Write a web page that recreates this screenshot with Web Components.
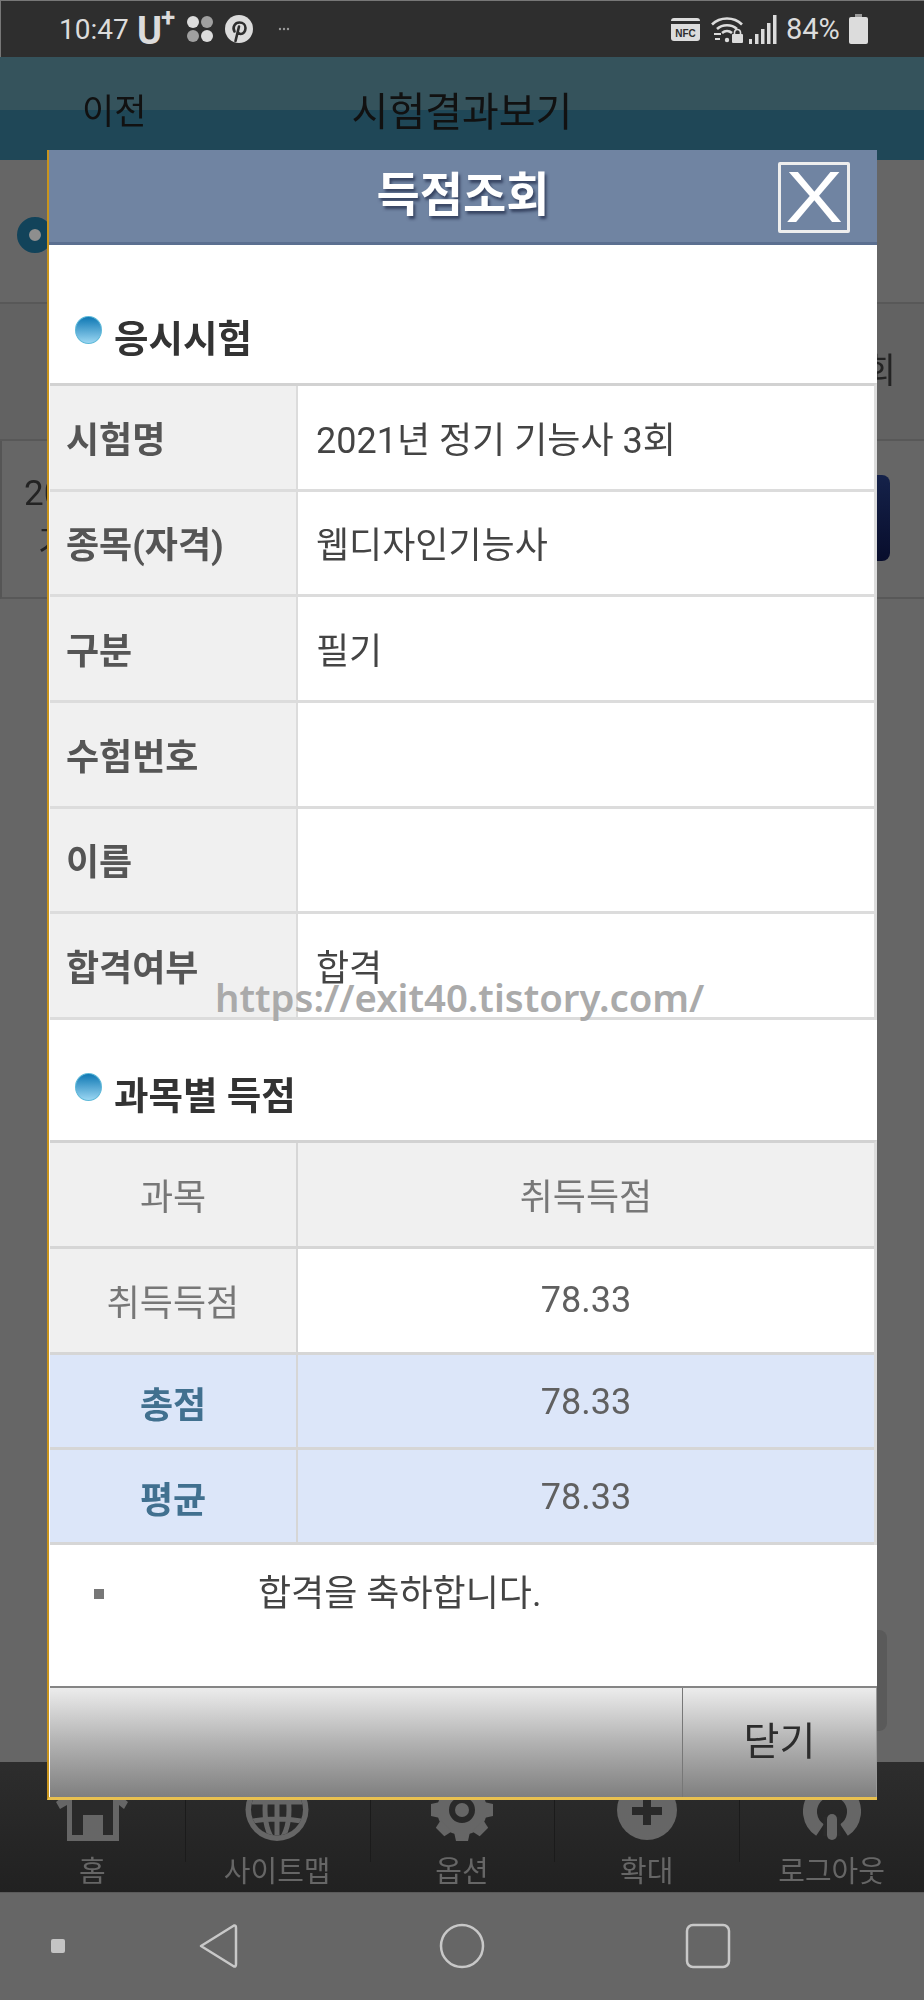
<!DOCTYPE html>
<html lang="ko">
<head>
<meta charset="utf-8">
<title>득점조회</title>
<style>
    html, body { margin: 0; padding: 0; }
    body {
        position: relative;
        width: 924px;
        height: 2000px;
        overflow: hidden;
        background: #666;
        font-family: Roboto, "Noto Sans CJK KR", sans-serif;
    }
</style>
</head>
<body>
<status-bar></status-bar>
<app-header></app-header>
<back-page></back-page>
<bottom-menu></bottom-menu>
<android-nav></android-nav>

<score-dialog>
    <section-title style="height:138px">응시시험</section-title>
    <info-table style="grid-auto-rows:105.67px">
        <info-row label="시험명">2021년 정기 기능사 3회</info-row>
        <info-row label="종목(자격)">웹디자인기능사</info-row>
        <info-row label="구분">필기</info-row>
        <info-row label="수험번호"></info-row>
        <info-row label="이름"></info-row>
        <info-row label="합격여부">합격</info-row>
    </info-table>
    <section-title style="height:120px">과목별 득점</section-title>
    <info-table style="grid-template-rows:106px 106px 95px 95px">
        <score-row label="과목" head>취득득점</score-row>
        <score-row label="취득득점">78.33</score-row>
        <score-row label="총점" total>78.33</score-row>
        <score-row label="평균" total>78.33</score-row>
    </info-table>
    <result-note>합격을 축하합니다.</result-note>
</score-dialog>

<water-mark>https://exit40.tistory.com/</water-mark>

<script>
// Small base class, each element just passes its markup
class ShadowBox extends HTMLElement {
    constructor(html) {
        super();
        this.attachShadow({ mode: 'open' });
        this.shadowRoot.innerHTML = html;
    }
}

class StatusBar extends ShadowBox {
    constructor() {
        super(`
            <style>
                :host {
                    display: flex;
                    align-items: center;
                    box-sizing: border-box;
                    height: 57px;
                    padding: 1px 56px 0 59px;
                    background: #2e2e2e;
                    box-shadow: inset 1px 1px 0 #777;
                    color: #dcdcdc;
                    font-size: 28px;
                }
                .time { width: 78px; }
                .carrier { position: relative; width: 50px; margin-top: 4px; font-size: 38px; line-height: 44px; font-weight: 700; }
                .carrier sup { position: absolute; left: 24px; top: -5px; font-size: 26px; line-height: 26px; }
                svg { display: block; flex: none; }
                .more { margin-left: 25px; }
                .spacer { flex: 1; }
                .nfc {
                    position: relative;
                    box-sizing: border-box;
                    width: 29px;
                    height: 23px;
                    margin-right: 11px;
                    border-top: 3px solid #dcdcdc;
                    border-radius: 3px;
                    background: linear-gradient(#2e2e2e 3px, #dcdcdc 3px);
                    color: #2e2e2e;
                    font: 800 10px/25px "Liberation Sans", sans-serif;
                    text-align: center;
                }
                .pct { width: 63px; margin-left: 9px; font-size: 29px; }
            </style>
            <span class="time">10:47</span>
            <span class="carrier">U<sup>+</sup></span>
            <svg width="28" height="28" viewBox="0 0 28 28" style="margin-left:-1px">
                <circle cx="7" cy="7" r="6" fill="#dcdcdc"/><circle cx="21" cy="7" r="6" fill="#a0a0a0"/>
                <circle cx="7" cy="21" r="6" fill="#a0a0a0"/><circle cx="21" cy="21" r="6" fill="#dcdcdc"/>
            </svg>
            <svg width="28" height="28" viewBox="0 0 28 28" style="margin-left:11px">
                <circle cx="14" cy="14" r="14" fill="#dcdcdc"/>
                <path d="M9.5 16.500C7 12 10 7.500 14.500 7.500c3.700 0 6 2.500 6 5.500 0 3.500-2.300 6-4.800 6-1.500 0-2.500-.8-3-1.800M14 11.500 10.500 26" fill="none" stroke="#2e2e2e" stroke-width="2.600" stroke-linecap="round"/>
            </svg>
            <svg class="more" width="12" height="4" viewBox="0 0 12 4">
                <circle cx="2" cy="2" r="1.200" fill="#999"/><circle cx="6" cy="2" r="1.200" fill="#999"/><circle cx="10" cy="2" r="1.200" fill="#999"/>
            </svg>
            <span class="spacer"></span>
            <span class="nfc">NFC</span>
            <svg width="32" height="28" viewBox="0 0 32 28" fill="none" stroke="#dcdcdc" stroke-width="2.600">
                <path d="M1 9.500C9 1.500 23 1.500 31 9.500"/>
                <path d="M6 14c5.500-5 14.500-5 20 0"/>
                <path d="M11 18c3-2.500 7-2.500 10 0"/>
                <circle cx="16" cy="25" r="2.200" fill="#dcdcdc" stroke="none"/>
                <path d="M3 19h7M4 24h5" stroke-width="2"/>
                <rect x="21" y="19" width="11" height="9" rx="1" fill="#dcdcdc" stroke="none"/>
                <path d="M23.500 19v-1.500a3 3 0 0 1 6 0V19" stroke-width="1.600"/>
            </svg>
            <svg width="28" height="29" viewBox="0 0 28 29" fill="#dcdcdc" style="margin-left:6px">
                <rect x="0" y="24" width="3" height="5"/><rect x="6" y="19" width="3.500" height="10"/>
                <rect x="12" y="14" width="3.500" height="15"/><rect x="18" y="8" width="3.500" height="21"/>
                <rect x="24" y="0" width="3.500" height="29"/>
            </svg>
            <span class="pct">84%</span>
            <svg width="19" height="30" viewBox="0 0 19 30" fill="#dcdcdc">
                <rect x="6" y="0" width="7" height="3" fill="#999"/>
                <rect x="0" y="3" width="19" height="27" rx="2"/>
            </svg>
        `);
    }
}

class AppHeader extends ShadowBox {
    constructor() {
        super(`
            <style>
                :host {
                    display: grid;
                    grid-template-columns: 1fr auto 1fr;
                    align-items: center;
                    height: 103px;
                    background: linear-gradient(#35535c 53px, #1f4757 53px);
                    color: #111;
                    font-size: 40px;
                    filter: blur(.5px);
                }
                .back { padding-left: 82px; font-size: 35px; }
            </style>
            <span class="back">이전</span>
            <span>시험결과보기</span>
            <span></span>
        `);
    }
}

// The page dimmed behind the dialog, only its edges show
class BackPage extends ShadowBox {
    constructor() {
        super(`
            <style>
                :host {
                    display: block;
                    height: 1602px;
                    background: #666;
                    color: #232323;
                    font-size: 35px;
                    filter: blur(.5px);
                }
                .logo { height: 142px; padding-left: 17px; box-sizing: border-box; padding-top: 57px; }
                .logo i {
                    display: block;
                    box-sizing: border-box;
                    width: 36px;
                    height: 36px;
                    border: 12px solid #12435a;
                    border-radius: 50%;
                    background: #8e8e8e;
                }
                .head {
                    display: flex;
                    justify-content: flex-end;
                    align-items: center;
                    box-sizing: border-box;
                    height: 139px;
                    padding: 0 28px 8px 0;
                    border-top: 2px solid #585858;
                    border-bottom: 2px solid #585858;
                    background: #626262;
                }
                .row {
                    display: flex;
                    justify-content: space-between;
                    align-items: center;
                    box-sizing: border-box;
                    height: 158px;
                    padding: 0 34px 0 0;
                    border-left: 2px solid #555;
                    border-bottom: 2px solid #585858;
                    line-height: 50px;
                }
                .date { padding-left: 22px; }
                .date span { display: block; padding-left: 14px; }
                .go {
                    width: 100px;
                    height: 86px;
                    margin-top: -3px;
                    border-radius: 8px;
                    background: linear-gradient(#15224a, #080d2c);
                }
                .side {
                    width: 100px;
                    height: 101px;
                    margin: 1031px 37px 0 auto;
                    border-radius: 8px;
                    background: #5a5a5a;
                }
            </style>
            <div class="logo"><i></i></div>
            <div class="head">회</div>
            <div class="row">
                <div class="date">2021년<span>기능사</span></div>
                <div class="go"></div>
            </div>
            <div class="side"></div>
        `);
    }
}

class BottomMenu extends ShadowBox {
    constructor() {
        super(`
            <style>
                :host {
                    display: grid;
                    grid-template-columns: repeat(5, 1fr);
                    height: 130px;
                    background: linear-gradient(#2d2d2d, #212121);
                    color: #666;
                    font-size: 29px;
                    filter: blur(.5px);
                }
                div { display: flex; flex-direction: column; align-items: center; position: relative; }
                div + div::before {
                    content: "";
                    position: absolute;
                    left: 0;
                    top: 0;
                    height: 100px;
                    border-left: 1px solid #1b1b1b;
                }
                svg { display: block; margin-top: 10px; }
                span { line-height: 40px; margin-top: 10px; }
            </style>
            <div>
                <svg width="72" height="70" viewBox="0 0 72 70">
                    <path d="M36 0 72 30 68 37 63 33V69H11V33L4 37 0 30Z" fill="#666"/>
                    <path d="M16 26V63H27V43H47V63H57V26Z" fill="#2a2a2a"/>
                </svg>
                <span>홈</span>
            </div>
            <div>
                <svg width="64" height="70" viewBox="0 0 64 70">
                    <defs><clipPath id="globe"><circle cx="32" cy="37.500" r="26"/></clipPath></defs>
                    <circle cx="32" cy="37.500" r="31.500" fill="#666"/>
                    <circle cx="32" cy="37.500" r="26" fill="#292929"/>
                    <g clip-path="url(#globe)" fill="none" stroke="#666" stroke-width="5">
                        <ellipse cx="32" cy="37.500" rx="12" ry="31"/>
                        <path d="M32 6V69M2 30H62M2 50Q32 44 62 50"/>
                    </g>
                </svg>
                <span>사이트맵</span>
            </div>
            <div>
                <svg width="64" height="70" viewBox="0 0 64 70">
                    <circle cx="32" cy="38" r="19" fill="none" stroke="#666" stroke-width="12"/>
                    <g fill="#666">
                        <path d="M26 69h12l2-9H24Z"/>
                        <path d="M26 69h12l2-9H24Z" transform="rotate(45 32 38)"/>
                        <path d="M26 69h12l2-9H24Z" transform="rotate(90 32 38)"/>
                        <path d="M26 69h12l2-9H24Z" transform="rotate(135 32 38)"/>
                        <path d="M26 69h12l2-9H24Z" transform="rotate(225 32 38)"/>
                        <path d="M26 69h12l2-9H24Z" transform="rotate(270 32 38)"/>
                        <path d="M26 69h12l2-9H24Z" transform="rotate(-45 32 38)"/>
                    </g>
                    <circle cx="32" cy="38" r="7" fill="#666"/>
                </svg>
                <span>옵션</span>
            </div>
            <div>
                <svg width="60" height="70" viewBox="0 0 60 70">
                    <circle cx="30" cy="38" r="30" fill="#666"/>
                    <path d="M15 39H45M30 24V53" stroke="#292929" stroke-width="8"/>
                </svg>
                <span>확대</span>
            </div>
            <div>
                <svg width="58" height="70" viewBox="0 0 58 70" fill="none">
                    <path d="M17 58A22 22 0 1 1 41 58" stroke="#666" stroke-width="14"/>
                    <path d="M29 45V64" stroke="#2a2a2a" stroke-width="17"/>
                    <path d="M29 47V63" stroke="#666" stroke-width="10" stroke-linecap="round"/>
                </svg>
                <span>로그아웃</span>
            </div>
        `);
    }
}

class AndroidNav extends ShadowBox {
    constructor() {
        super(`
            <style>
                :host {
                    display: grid;
                    grid-template-columns: 116px 204px 284px 208px;
                    justify-items: center;
                    align-items: center;
                    height: 108px;
                    background: #666;
                    border-top: 1px solid #5a5a5a;
                    box-sizing: border-box;
                }
                svg { display: block; margin-bottom: 2px; }
            </style>
            <svg width="14" height="14" viewBox="0 0 14 14"><rect width="14" height="14" rx="2" fill="#c4c4c4"/></svg>
            <svg width="40" height="46" viewBox="0 0 40 46"><path d="M36 2.500 3 23 36 43.500Q38 44 38 41V5Q38 2 36 2.500Z" fill="none" stroke="#c8c8c8" stroke-width="2.500" stroke-linejoin="round"/></svg>
            <svg width="46" height="46" viewBox="0 0 46 46"><circle cx="23" cy="23" r="21" fill="none" stroke="#c8c8c8" stroke-width="2.500"/></svg>
            <svg width="46" height="46" viewBox="0 0 46 46"><rect x="2" y="2" width="42" height="42" rx="6" fill="none" stroke="#c8c8c8" stroke-width="2.500"/></svg>
        `);
    }
}

class ScoreDialog extends ShadowBox {
    constructor() {
        super(`
            <style>
                :host {
                    position: absolute;
                    left: 47px;
                    top: 150px;
                    display: flex;
                    flex-direction: column;
                    box-sizing: border-box;
                    width: 830px;
                    height: 1650px;
                    border-left: 2px solid #c8941e;
                    border-bottom: 3px solid #e8c050;
                    background: #fff;
                    filter: blur(.4px);
                }
                header {
                    display: grid;
                    grid-template-columns: 1fr auto 1fr;
                    align-items: center;
                    box-sizing: border-box;
                    height: 95px;
                    border-bottom: 3px solid #5b6f90;
                    background: #7084a2;
                    color: #fff;
                }
                h1 {
                    grid-column: 2;
                    margin: 0 0 11px;
                    font-size: 47px;
                    font-weight: 700;
                    text-shadow: 2px 3px 3px rgba(30, 40, 70, .7);
                }
                .close {
                    justify-self: end;
                    box-sizing: border-box;
                    width: 72px;
                    height: 71px;
                    margin: 3px 27px 0 0;
                    border: 3px solid #eee;
                    border-radius: 2px;
                    font: 400 72px/65px "Liberation Sans", sans-serif;
                    text-align: center;
                }
                .close span { display: block; transform: scaleX(1.2); }
                main { flex: 1; display: flex; flex-direction: column; }
                footer {
                    display: grid;
                    grid-template-columns: 1fr 195px;
                    box-sizing: border-box;
                    height: 111px;
                    margin-left: 1px;
                    border-top: 2px solid #858585;
                    background: linear-gradient(#ececec, #b2b2b2 50%, #7f7f7f);
                }
                button {
                    border: 0;
                    border-left: 1px solid #777;
                    border-right: 1px solid #999;
                    padding: 0;
                    background: transparent;
                    color: #2c2c2c;
                    font: inherit;
                    font-size: 39px;
                    line-height: 1;
                }
            </style>
            <header>
                <h1>득점조회</h1>
                <div class="close"><span>X</span></div>
            </header>
            <main><slot></slot></main>
            <footer><span></span><button type="button">닫기</button></footer>
        `);
    }
}

class SectionTitle extends ShadowBox {
    constructor() {
        super(`
            <style>
                :host {
                    display: flex;
                    align-items: flex-end;
                    box-sizing: border-box;
                    padding: 0 0 23px 26px;
                    color: #333;
                    font-size: 37.500px;
                    font-weight: 700;
                    line-height: 42px;
                }
                i {
                    width: 27px;
                    height: 28px;
                    margin: 0 12px 16px 0;
                    box-sizing: border-box;
                    border: 1px solid #5cb8d8;
                    border-radius: 50%;
                    background: linear-gradient(#0f78b4, #9ad6f2);
                }
            </style>
            <i></i><slot></slot>
        `);
    }
}

class InfoTable extends ShadowBox {
    constructor() {
        super(`
            <style>
                :host {
                    display: grid;
                    box-sizing: border-box;
                    margin-left: 1px;
                    border-top: 3px solid #d2d2d2;
                    border-right: 3px solid #dcdcdc;
                }
            </style>
            <slot></slot>
        `);
    }
}

class InfoRow extends ShadowBox {
    constructor() {
        super(`
            <style>
                :host {
                    display: grid;
                    grid-template-columns: 248px 1fr;
                    box-sizing: border-box;
                    border-bottom: 3px solid #dcdcdc;
                    color: #444;
                    font-size: 36px;
                }
                span { display: flex; align-items: center; padding-bottom: 1px; }
                .label {
                    padding-left: 16px;
                    border-right: 2px solid #dcdcdc;
                    background: #f0f0f0;
                    color: #555;
                    font-weight: 700;
                }
                .value { padding-left: 18px; }
            </style>
            <span class="label"></span>
            <span class="value"><slot></slot></span>
        `);
    }

    connectedCallback() {
        this.shadowRoot.querySelector('.label').textContent = this.getAttribute('label');
    }
}

class ScoreRow extends ShadowBox {
    constructor() {
        super(`
            <style>
                :host {
                    display: grid;
                    grid-template-columns: 248px 1fr;
                    box-sizing: border-box;
                    border-bottom: 3px solid #d6d6d6;
                    color: #606060;
                    font-size: 36px;
                }
                :host([total]) { background: #dce6f9; }
                :host([head]) { background: #f0f0f0; color: #777; }
                span {
                    display: flex;
                    align-items: center;
                    justify-content: center;
                }
                :host([total]) span { padding-top: 2px; }
                .label {
                    border-right: 2px solid #d6d6d6;
                    background: #f0f0f0;
                    color: #777;
                }
                :host([total]) .label {
                    background: transparent;
                    color: #41708f;
                    font-weight: 700;
                }
            </style>
            <span class="label"></span>
            <span><slot></slot></span>
        `);
    }

    connectedCallback() {
        this.shadowRoot.querySelector('.label').textContent = this.getAttribute('label');
    }
}

class ResultNote extends ShadowBox {
    constructor() {
        super(`
            <style>
                :host {
                    display: flex;
                    align-items: center;
                    padding: 26px 0 0 45px;
                    color: #444;
                    font-size: 36px;
                    line-height: 46px;
                }
                i { width: 10px; height: 10px; margin-right: 154px; background: #777; }
            </style>
            <i></i><slot></slot>
        `);
    }
}

// Blog watermark painted over the dialog
class WaterMark extends ShadowBox {
    constructor() {
        super(`
            <style>
                :host {
                    position: absolute;
                    left: 215px;
                    top: 974px;
                    color: #aaa;
                    font: 600 38.300px/46px "Noto Sans", sans-serif;
                    white-space: nowrap;
                }
            </style>
            <slot></slot>
        `);
    }
}

customElements.define('status-bar', StatusBar);
customElements.define('app-header', AppHeader);
customElements.define('back-page', BackPage);
customElements.define('bottom-menu', BottomMenu);
customElements.define('android-nav', AndroidNav);
customElements.define('score-dialog', ScoreDialog);
customElements.define('section-title', SectionTitle);
customElements.define('info-table', InfoTable);
customElements.define('info-row', InfoRow);
customElements.define('score-row', ScoreRow);
customElements.define('result-note', ResultNote);
customElements.define('water-mark', WaterMark);
</script>
</body>
</html>
